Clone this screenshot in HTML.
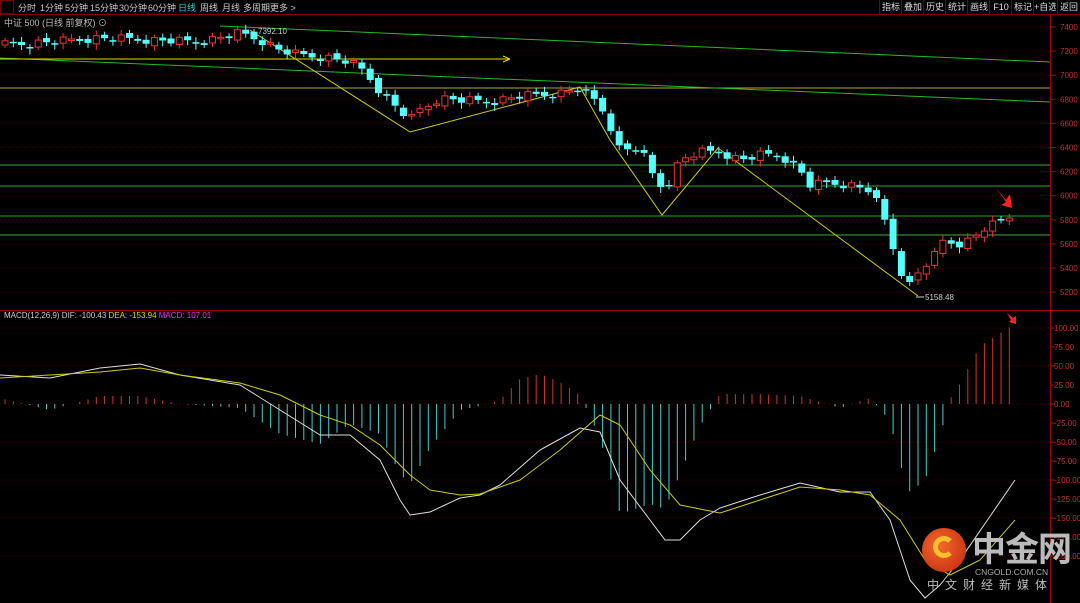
<!DOCTYPE html><html><head><meta charset="utf-8"><style>
body{margin:0;background:#000;width:1080px;height:603px;overflow:hidden;font-family:"Liberation Sans","Noto Sans CJK SC",sans-serif}
#top{position:absolute;left:0;top:0;width:1080px;height:14px;border-bottom:1px solid #7a0000;font-size:9px;color:#ccc;white-space:nowrap}
#top span{position:absolute;top:1px}
.rb{position:absolute;top:0;height:14px;border-left:1px solid #7a0000;font-size:9px;color:#ddd;line-height:14px;width:22px;text-align:center;white-space:nowrap;overflow:hidden}
svg{position:absolute;left:0;top:0}
</style></head><body>
<div id="top">
<span style="left:0;top:0;width:14px;height:14px;border:1px solid #7a0000;box-sizing:border-box"></span>
<span style="left:18px">分时</span><span style="left:40px">1分钟</span><span style="left:65px">5分钟</span><span style="left:90px">15分钟</span><span style="left:119px">30分钟</span><span style="left:148px">60分钟</span><span style="left:178px;color:#3cc">日线</span><span style="left:200px">周线</span><span style="left:222px">月线</span><span style="left:243px">多周期</span><span style="left:270px">更多 &gt;</span>
</div>
<div class="rb" style="left:879px">指标</div><div class="rb" style="left:901px">叠加</div><div class="rb" style="left:923px">历史</div><div class="rb" style="left:945px">统计</div><div class="rb" style="left:967px">画线</div><div class="rb" style="left:989px">F10</div><div class="rb" style="left:1011px">标记</div><div class="rb" style="left:1033px">+自选</div><div class="rb" style="left:1057px">返回</div>
<svg id="s" width="1080" height="603" style="top:0"></svg>
<div style="position:absolute;left:4px;top:16px;font-size:9px;color:#bbb">中证 500 (日线 前复权) ⊙</div>
<div style="position:absolute;left:4px;top:311px;font-size:8px;color:#ccc;white-space:nowrap">MACD(12,26,9) DIF: -100.43 <span style="color:#dd0">DEA: -153.94</span> <span style="color:#e3e">MACD: 107.01</span></div>
<div style="position:absolute;left:922px;top:528px;width:44px;height:44px;border-radius:50%;background:radial-gradient(circle at 40% 40%,#f46a2a,#c0240c)"></div>
<div style="position:absolute;left:933px;top:536px;width:22px;height:22px;border-radius:50%;border:5px solid #f8c030;border-right-color:transparent;box-sizing:border-box"></div>
<div style="position:absolute;left:972px;top:527px;font-size:34px;font-weight:bold;color:#bbb;letter-spacing:-1px;font-family:'Noto Sans CJK SC',sans-serif;line-height:40px">中金网</div>
<div style="position:absolute;left:975px;top:567px;font-size:8.5px;color:#aaa">CNGOLD.COM.CN</div>
<div style="position:absolute;left:927px;top:576px;font-size:12px;color:#bbb;letter-spacing:6px;font-family:'Noto Sans CJK SC',sans-serif">中文财经新媒体</div>
<script>
const s=document.getElementById('s');let h='';
const L=(x1,y1,x2,y2,c,w,d)=>h+=`<line x1="${x1}" y1="${y1}" x2="${x2}" y2="${y2}" stroke="${c}" stroke-width="${w||1}" ${d?'stroke-dasharray="'+d+'"':''}/>`;
const T=(x,y,t,c,sz)=>h+=`<text x="${x}" y="${y}" fill="${c}" font-size="${sz||8}" font-family="Liberation Sans">${t}</text>`;
L(0,310.5,1080,310.5,'#a00000');L(1050.5,14,1050.5,603,'#a00000');
for(let v=7400;v>=5200;v-=200){let y=27+(7400-v)*0.1205;L(1050,y,1056,y,'#a00000');L(0,y,1050,y,'#400000',1,'1 3');T(1060,y+3,v,'#c03030')}
for(let v=100;v>=-200;v-=25){let y=404-v*0.76;L(1050,y,1055,y,'#a00000');if(v%50==0)L(0,y,1050,y,'#400000',1,'1 3');T(1054,y+3,v.toFixed(2),'#c03030')}
L(0,165,1050,165,'#4a4');L(0,186,1050,186,'#2a2');L(0,216,1050,216,'#2a2');L(0,235,1050,235,'#4a4');L(0,88,1050,88,'#aa3');
L(220,26,1050,62,'#2b2');L(0,58,1050,102,'#2b2');L(0,59,510,59,'#dd0');L(503,56,510,59,'#dd0');L(503,62,510,59,'#dd0');
h+='<polyline points="250,30 410,132 580,87 610,140 662,215 718,148 918,296" fill="none" stroke="#cc0"/>';
const interp=(P,x)=>{for(let i=0;i<P.length-2;i+=2){if(x>=P[i]&&x<=P[i+2])return P[i+1]+(P[i+3]-P[i+1])*(x-P[i])/(P[i+2]-P[i])}return P[P.length-1]};
const C=[0,45,50,42,100,38,150,40,200,42,240,33,260,40,280,50,300,55,330,58,350,62,365,72,383,95,400,110,410,120,420,110,440,98,460,100,490,102,520,96,540,95,560,93,580,88,600,105,610,125,620,150,640,148,655,180,665,190,680,160,700,152,720,152,740,160,760,155,780,155,800,170,810,185,830,183,850,185,870,190,882,212,900,270,910,285,920,270,935,255,945,238,955,245,970,240,985,228,1000,222,1008,216,1015,220];
let prev=47,k=0;
for(let x=5;x<=1015;x+=8.3,k++){let c=interp(C,x)+((k*37)%7-3)*1.3;let o=prev+((k*13)%5-2);let top=Math.min(o,c),bot=Math.max(o,c);if(bot-top<1.5)bot=top+1.5;let up=c<o;let col=up?'#e33':'#5ff';L(x,top-3-(k%3),x,bot+3+(k%4),col);
h+=up?`<rect x="${x-3}" y="${top}" width="6" height="${bot-top}" fill="#000" stroke="${col}"/>`:`<rect x="${x-3.5}" y="${top}" width="7" height="${bot-top}" fill="${col}"/>`;prev=c}
T(258,34,'7392.10','#ccc');T(925,300,'5158.48','#ccc');L(916,297,924,297,'#ccc');
h+='<polygon points="996,188 1006,200 1010,194 1012,208 1001,205 1006,202" fill="#f22"/><polygon points="1007,313 1013,318 1016,316 1016,324 1009,322 1011,320" fill="#f22"/>';
const D=[0,375,50,378,100,368,140,364,180,375,240,385,280,410,320,435,350,435,380,460,400,500,410,515,430,512,460,498,480,495,500,485,540,450,580,428,600,432,620,480,650,520,665,540,680,540,700,520,720,508,760,495,800,483,840,492,870,492,890,520,910,580,925,598,940,585,960,560,1015,480];
const E=[0,378,50,375,100,372,140,368,180,375,240,383,280,395,320,415,350,425,380,445,410,475,430,490,460,495,480,494,520,480,560,450,600,415,620,425,650,470,680,505,720,513,760,500,800,487,840,490,870,495,900,520,925,560,950,575,980,560,1015,520];
for(let x=5;x<=1015;x+=8.3){let d=interp(E,x)-interp(D,x);let y=404-2*d;if(y<315)y=322;L(x,404,x,y,d>0?'#c33':'#4cc')}
let p1='',p2='';for(let x=0;x<=1015;x+=5){p1+=x+','+interp(D,x)+' ';p2+=x+','+interp(E,x)+' '}
h+=`<polyline points="${p1}" fill="none" stroke="#ddd"/><polyline points="${p2}" fill="none" stroke="#cc0"/>`;
s.innerHTML=h;
</script>
</body></html>
